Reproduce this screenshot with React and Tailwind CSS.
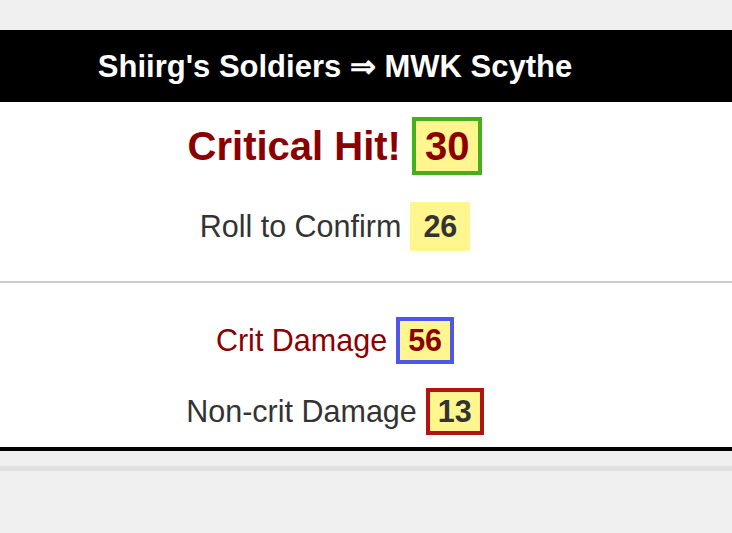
const font = { fontFamily: '"Liberation Sans", Arial, sans-serif' }

export default function App() {
  return (
    <div className="min-h-[533px] bg-[#f0f0f0]" style={font}>
      <div className="h-[30px]" />
      <div className="flex h-[72px] items-center bg-black">
        <div className="w-[670px] pt-[2px] text-center text-[31px] font-bold leading-[36px] text-white">
          Shiirg's Soldiers ⇒ MWK Scythe
        </div>
      </div>

      <div className="border-b-4 border-black bg-white">
        <div className="w-[670px] pt-[15px] pb-[30px]">
          <div className="flex items-baseline justify-center gap-[11px]">
            <span className="text-[40px] font-bold leading-[46px] text-[#8b0000]">Critical Hit!</span>
            <span className="inline-block border-4 border-[#44b01c] bg-[#fff68f] px-[9px] py-[2px] text-[40px] font-bold leading-[46px] text-[#8b0000]">
              30
            </span>
          </div>
          <div className="mt-[27px] flex items-baseline justify-center gap-[9px]">
            <span className="text-[30.5px] leading-[35px] text-[#333]">Roll to Confirm</span>
            <span className="inline-block bg-[#fff68f] px-[13px] py-[7px] text-[30.5px] font-bold leading-[35px] text-[#333]">
              26
            </span>
          </div>
        </div>

        <div className="h-[2px] bg-[#cccccc]" />

        <div className="w-[670px] pt-[34px] pb-[12px]">
          <div className="flex items-baseline justify-center gap-[9px]">
            <span className="text-[30.5px] leading-[35px] text-[#8b0000]">Crit Damage</span>
            <span className="inline-block border-4 border-[#4f57e8] bg-[#fff68f] px-[8px] py-[2px] text-[30.5px] font-bold leading-[35px] text-[#8b0000]">
              56
            </span>
          </div>
          <div className="mt-[24px] flex items-baseline justify-center gap-[9px]">
            <span className="text-[30.5px] leading-[35px] text-[#333]">Non-crit Damage</span>
            <span className="inline-block border-4 border-[#b01414] bg-[#fff68f] px-[8px] py-[2px] text-[30.5px] font-bold leading-[35px] text-[#333]">
              13
            </span>
          </div>
        </div>
      </div>

      <div className="h-[15px]" />
      <div className="h-[5px] bg-[#e0e0e0]" />
    </div>
  )
}
